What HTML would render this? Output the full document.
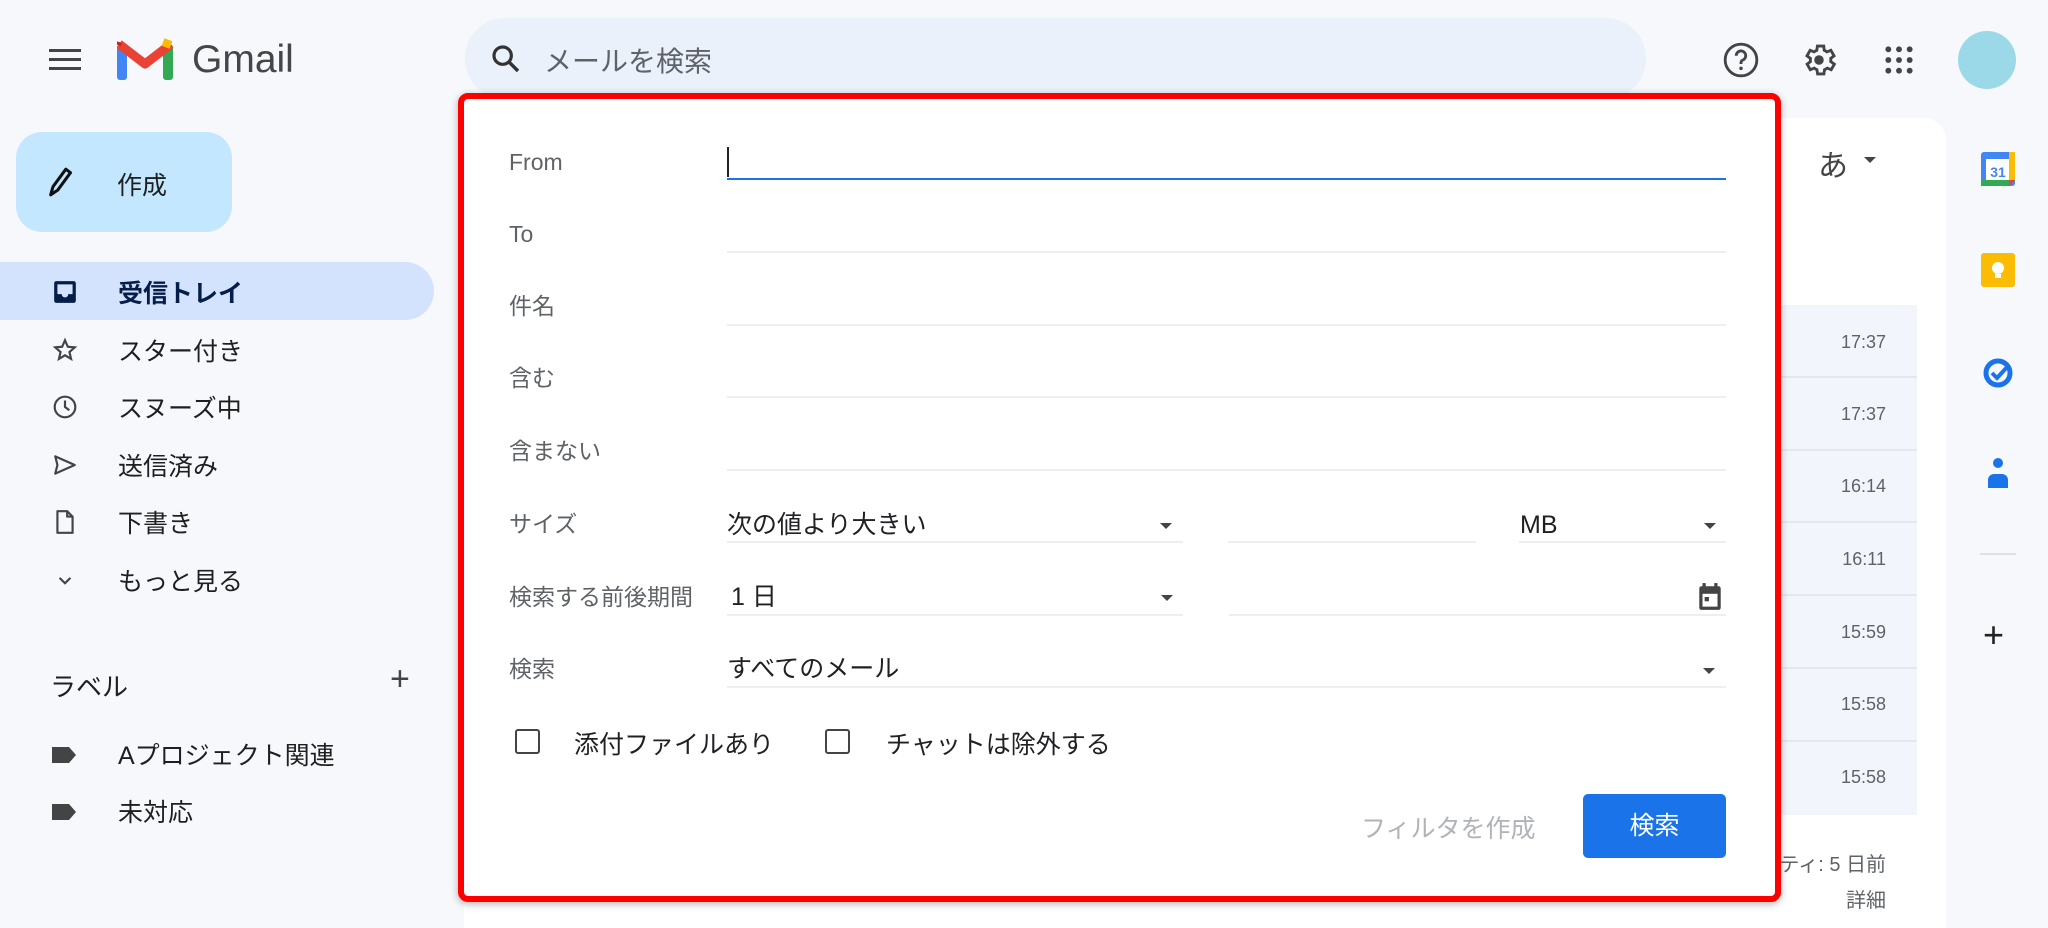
<!DOCTYPE html>
<html><head><meta charset="utf-8"><style>
*{box-sizing:border-box;margin:0;padding:0}
body{width:2048px;height:922px;background:#f6f8fc;font-family:"Liberation Sans","Noto Sans CJK JP",sans-serif;color:#444746;position:relative;overflow:hidden}
.a{position:absolute}
.nav{position:absolute;left:118px;font-size:25px;color:#1f1f1f;line-height:1.2}
.ic{position:absolute;left:52px}
.lbl{position:absolute;left:509px;font-size:23px;color:#5f6368;line-height:1.2}
.ul{position:absolute;height:2px;background:#eceef0}
.time{position:absolute;right:162px;font-size:18px;color:#5f6368}
.sel{position:absolute;font-size:25px;color:#202124;line-height:1.2}
.tri{position:absolute;width:0;height:0;border-left:6px solid transparent;border-right:6px solid transparent;border-top:6px solid #444}
.cb{position:absolute;width:25px;height:25px;border:2.5px solid #444;border-radius:3px}
</style></head><body>
<svg class="a" style="left:49px;top:47px" width="32" height="26" viewBox="0 0 32 26"><rect y="2" width="32" height="3" fill="#444"/><rect y="11" width="32" height="3" fill="#444"/><rect y="20" width="32" height="3" fill="#444"/></svg>
<svg class="a" style="left:117px;top:38px" width="56" height="42" viewBox="0 0 56 42"><rect x="0" y="8" width="10" height="34" rx="3" fill="#4285f4"/><rect x="46" y="8" width="10" height="34" rx="3" fill="#34a853"/><path d="M2 6l26 20L54 6" fill="none" stroke="#ea4335" stroke-width="9" stroke-linejoin="round"/><path d="M46 4l8 3" stroke="#fbbc04" stroke-width="8"/><path d="M2 4l-1 3" stroke="#c5221f" stroke-width="6"/></svg>
<div class="a" style="left:192px;top:38px;font-size:39px;color:#444746">Gmail</div>
<div class="a" style="left:465px;top:18px;width:1181px;height:81px;border-radius:40px;background:#eaf1fb"></div>
<svg class="a" style="left:490px;top:43px" width="32" height="32" viewBox="0 0 24 24"><circle cx="9.5" cy="9.5" r="6.5" fill="none" stroke="#333" stroke-width="2.4"/><path d="M14.5 14.5l6.5 6.5" stroke="#333" stroke-width="2.6"/></svg>
<div class="a" style="left:544px;top:40px;font-size:28px;color:#5f6368">メールを検索</div>
<svg class="a" style="left:1722px;top:41px" width="38" height="38" viewBox="0 0 24 24"><circle cx="12" cy="12" r="10" fill="none" stroke="#444" stroke-width="1.8"/><path d="M9 9.3a3 3 0 1 1 4 2.8c-1 .5-1 1.2-1 2.4" fill="none" stroke="#444" stroke-width="1.8"/><circle cx="12" cy="17.3" r="1.1" fill="#444"/></svg>
<svg class="a" style="left:1800px;top:41px" width="38" height="38" viewBox="0 0 24 24"><path d="M19.4 13a7.5 7.5 0 0 0 0-2l2.1-1.6-2-3.5-2.5 1a7.4 7.4 0 0 0-1.7-1L15 3.2h-4l-.4 2.7a7.4 7.4 0 0 0-1.7 1l-2.5-1-2 3.5L6.6 11a7.5 7.5 0 0 0 0 2l-2.1 1.6 2 3.5 2.5-1a7.4 7.4 0 0 0 1.7 1l.4 2.7h4l.4-2.7a7.4 7.4 0 0 0 1.7-1l2.5 1 2-3.5z" fill="none" stroke="#444" stroke-width="1.8"/><circle cx="12" cy="12" r="3" fill="#444"/></svg>
<svg class="a" style="left:1883px;top:44px" width="32" height="32" viewBox="0 0 24 24" fill="#444"><circle cx="4" cy="4" r="2.2"/><circle cx="12" cy="4" r="2.2"/><circle cx="20" cy="4" r="2.2"/><circle cx="4" cy="12" r="2.2"/><circle cx="12" cy="12" r="2.2"/><circle cx="20" cy="12" r="2.2"/><circle cx="4" cy="20" r="2.2"/><circle cx="12" cy="20" r="2.2"/><circle cx="20" cy="20" r="2.2"/></svg>
<div class="a" style="left:1958px;top:31px;width:58px;height:58px;border-radius:50%;background:#9bd8e8"></div>
<div class="a" style="left:16px;top:132px;width:216px;height:100px;border-radius:26px;background:#c2e7ff"></div>
<svg class="a" style="left:46px;top:164px" width="28" height="36" viewBox="0 0 24 30"><path d="M4 26l2-7L17 4l4 3-11 15z" fill="none" stroke="#111" stroke-width="2.6" stroke-linejoin="round"/></svg>
<div class="a" style="left:117px;top:166px;font-size:25px;color:#1f1f1f">作成</div>
<div class="a" style="left:0;top:262px;width:434px;height:58px;border-radius:0 29px 29px 0;background:#d3e3fd"></div>
<svg class="ic" style="top:279px" width="26" height="26" viewBox="0 0 24 24"><rect x="2" y="2" width="20" height="20" rx="2" fill="#041e49"/><path d="M5 5h14v9h-4a3 3 0 0 1-6 0H5z" fill="#d3e3fd"/></svg>
<div class="nav" style="top:279px;font-weight:bold;color:#041e49">受信トレイ</div>
<svg class="ic" style="top:337px" width="26" height="26" viewBox="0 0 24 24"><path d="M12 3l2.6 6 6.4.6-4.9 4.3 1.5 6.3L12 16.9 6.4 20.2l1.5-6.3L3 9.6l6.4-.6z" fill="none" stroke="#444" stroke-width="2"/></svg>
<div class="nav" style="top:337px">スター付き</div>
<svg class="ic" style="top:394px" width="26" height="26" viewBox="0 0 24 24"><circle cx="12" cy="12" r="9.5" fill="none" stroke="#444" stroke-width="2"/><path d="M12 6v6l4 3" fill="none" stroke="#444" stroke-width="2"/></svg>
<div class="nav" style="top:394px">スヌーズ中</div>
<svg class="ic" style="top:452px" width="26" height="26" viewBox="0 0 24 24"><path d="M3 4l18 8-18 8 2-8z" fill="none" stroke="#444" stroke-width="2" stroke-linejoin="round"/></svg>
<div class="nav" style="top:452px">送信済み</div>
<svg class="ic" style="top:509px" width="26" height="26" viewBox="0 0 24 24"><path d="M5 2h9l5 5v15H5z M14 2v5h5" fill="none" stroke="#444" stroke-width="2" stroke-linejoin="round"/></svg>
<div class="nav" style="top:509px">下書き</div>
<svg class="ic" style="top:567px" width="26" height="26" viewBox="0 0 24 24"><path d="M7 10l5 5 5-5" fill="none" stroke="#444" stroke-width="2"/></svg>
<div class="nav" style="top:567px">もっと見る</div>
<div class="a" style="left:50px;top:667px;font-size:26px;color:#1f1f1f">ラベル</div>
<div class="a" style="left:390px;top:660px;font-size:34px;color:#444">+</div>
<svg class="ic" style="top:745px" width="26" height="20" viewBox="0 0 26 20"><path d="M0 2h17l7 8-7 8H0z" fill="#444"/></svg>
<div class="nav" style="top:741px">Aプロジェクト関連</div>
<svg class="ic" style="top:802px" width="26" height="20" viewBox="0 0 26 20"><path d="M0 2h17l7 8-7 8H0z" fill="#444"/></svg>
<div class="nav" style="top:798px">未対応</div>
<div class="a" style="left:464px;top:118px;width:1482px;height:810px;background:#fff;border-radius:22px 22px 0 0"></div>
<div class="a" style="left:1818px;top:141px;font-size:30px;color:#444">あ</div>
<div class="tri" style="left:1864px;top:157px"></div>
<div class="a" style="left:1780px;top:305px;width:137px;height:510px;background:#f2f6fc"></div>
<div class="a" style="left:1780px;top:376px;width:137px;height:2px;background:#e4e8ee"></div>
<div class="a" style="left:1780px;top:449px;width:137px;height:2px;background:#e4e8ee"></div>
<div class="a" style="left:1780px;top:521px;width:137px;height:2px;background:#e4e8ee"></div>
<div class="a" style="left:1780px;top:594px;width:137px;height:2px;background:#e4e8ee"></div>
<div class="a" style="left:1780px;top:667px;width:137px;height:2px;background:#e4e8ee"></div>
<div class="a" style="left:1780px;top:740px;width:137px;height:2px;background:#e4e8ee"></div>
<div class="time" style="top:332px">17:37</div>
<div class="time" style="top:404px">17:37</div>
<div class="time" style="top:476px">16:14</div>
<div class="time" style="top:549px">16:11</div>
<div class="time" style="top:622px">15:59</div>
<div class="time" style="top:694px">15:58</div>
<div class="time" style="top:767px">15:58</div>
<div class="time" style="top:848px;font-size:20px">ティ: 5 日前</div>
<div class="time" style="top:884px;font-size:20px">詳細</div>
<svg class="a" style="left:1981px;top:152px" width="34" height="34" viewBox="0 0 34 34"><rect x="0" y="0" width="34" height="34" rx="3" fill="#4285f4"/><rect x="5" y="7" width="24" height="22" fill="#fff"/><rect x="28" y="0" width="6" height="28" fill="#fbbc04"/><rect x="0" y="28" width="28" height="6" fill="#34a853"/><path d="M28 28h6l-6 6z" fill="#ea4335"/><text x="17" y="25" font-size="14" text-anchor="middle" fill="#4285f4" font-family="Liberation Sans" font-weight="bold">31</text></svg>
<svg class="a" style="left:1981px;top:253px" width="34" height="34" viewBox="0 0 34 34"><rect width="34" height="34" rx="3" fill="#fbbc04"/><circle cx="17" cy="15" r="6" fill="#fff"/><rect x="14" y="21" width="6" height="4" fill="#fff"/></svg>
<svg class="a" style="left:1981px;top:355px" width="34" height="34" viewBox="0 0 34 34"><circle cx="17" cy="18" r="12" fill="none" stroke="#1a73e8" stroke-width="5"/><path d="M11 18l5 5 12-13" fill="none" stroke="#1a73e8" stroke-width="4"/></svg>
<svg class="a" style="left:1985px;top:456px" width="26" height="34" viewBox="0 0 26 34"><circle cx="13" cy="7" r="5" fill="#1a73e8"/><path d="M3 32v-8a6 6 0 0 1 6-6h8a6 6 0 0 1 6 6v8z" fill="#1a73e8"/></svg>
<div class="a" style="left:1980px;top:553px;width:36px;height:2px;background:#dde1e6"></div>
<div class="a" style="left:1983px;top:614px;font-size:36px;color:#222">+</div>
<div class="a" style="left:458px;top:93px;width:1323px;height:809px;background:#fff;border:6px solid #f00;border-radius:10px;box-shadow:0 2px 8px rgba(0,0,0,.3)"></div>
<div class="lbl" style="top:149px">From</div>
<div class="lbl" style="top:221px">To</div>
<div class="lbl" style="top:293px">件名</div>
<div class="lbl" style="top:365px">含む</div>
<div class="lbl" style="top:438px">含まない</div>
<div class="lbl" style="top:511px">サイズ</div>
<div class="lbl" style="top:584px">検索する前後期間</div>
<div class="lbl" style="top:656px">検索</div>
<div class="a" style="left:727px;top:147px;width:2px;height:30px;background:#222"></div>
<div class="ul" style="left:727px;top:178px;width:999px;background:#1a73e8"></div>
<div class="ul" style="left:727px;top:251px;width:999px"></div>
<div class="ul" style="left:727px;top:324px;width:999px"></div>
<div class="ul" style="left:727px;top:396px;width:999px"></div>
<div class="ul" style="left:727px;top:469px;width:999px"></div>
<div class="sel" style="left:727px;top:510px">次の値より大きい</div>
<div class="tri" style="left:1160px;top:523px"></div>
<div class="ul" style="left:727px;top:541px;width:456px"></div>
<div class="ul" style="left:1228px;top:541px;width:248px"></div>
<div class="sel" style="left:1520px;top:510px">MB</div>
<div class="tri" style="left:1704px;top:523px"></div>
<div class="ul" style="left:1519px;top:541px;width:207px"></div>
<div class="sel" style="left:731px;top:582px">1 日</div>
<div class="tri" style="left:1161px;top:595px"></div>
<div class="ul" style="left:727px;top:614px;width:456px"></div>
<svg class="a" style="left:1697px;top:582px" width="26" height="30" viewBox="0 0 24 28"><rect x="2" y="4" width="20" height="22" rx="2" fill="#444"/><rect x="5" y="11" width="14" height="12" fill="#fff"/><rect x="7" y="14" width="4" height="4" fill="#444"/><rect x="5" y="1" width="3" height="5" fill="#444"/><rect x="16" y="1" width="3" height="5" fill="#444"/></svg>
<div class="ul" style="left:1229px;top:614px;width:497px"></div>
<div class="sel" style="left:727px;top:654px">すべてのメール</div>
<div class="tri" style="left:1703px;top:668px"></div>
<div class="ul" style="left:727px;top:686px;width:999px"></div>
<div class="cb" style="left:515px;top:729px"></div>
<div class="a" style="left:574px;top:725px;font-size:25px;color:#202124">添付ファイルあり</div>
<div class="cb" style="left:825px;top:729px"></div>
<div class="a" style="left:886px;top:725px;font-size:25px;color:#202124">チャットは除外する</div>
<div class="a" style="left:1361px;top:809px;font-size:25px;color:#b0b3b8">フィルタを作成</div>
<div class="a" style="left:1583px;top:794px;width:143px;height:64px;background:#1a73e8;border-radius:5px;color:#fff;font-size:25px;text-align:center;line-height:64px">検索</div>
</body></html>
